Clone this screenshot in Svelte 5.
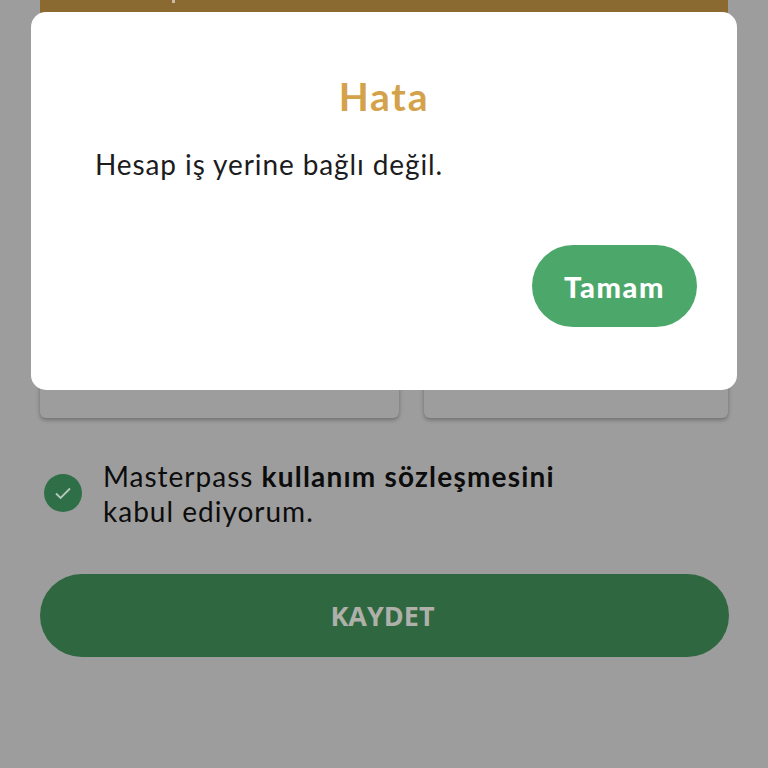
<script>
    let accepted = $state(true);
    let showError = $state(true);
</script>

<style>
    :global(body) {
        margin: 0;
        background: #9d9d9d;
    }

    .page {
        position: relative;
        height: 768px;
        overflow: hidden;
        padding: 0 40px;
        box-sizing: border-box;
        font-family: Lato, "Noto Sans", sans-serif;
        color: #0c0c0c;
    }

    .top-bar {
        position: relative;
        height: 60px;
        background: #8a6a30;
    }

    /* descender of the label that scrolled off the top */
    .top-bar::before {
        content: "";
        position: absolute;
        top: 0;
        left: 132px;
        width: 3px;
        height: 3px;
        background: #c9b9a6;
    }

    .fields {
        display: flex;
        gap: 25px;
        margin-top: 268px;
    }

    .field {
        flex: 359;
        height: 90px;
        background: #9d9d9d;
        border-radius: 6px;
        box-shadow: 0 2px 4px rgba(0, 0, 0, 0.3);
    }

    .field + .field {
        flex: 304;
    }

    .agreement {
        display: flex;
        align-items: center;
        gap: 21px;
        margin: 41px 0 0 4px;
        font-size: 28px;
        line-height: 35px;
        letter-spacing: 1px;
    }

    .check {
        flex: none;
        width: 38px;
        height: 38px;
        margin-top: -2px;
        padding: 0;
        border: none;
        border-radius: 50%;
        background: #2f6f47;
        display: flex;
        align-items: center;
        justify-content: center;
    }

    .agreement b {
        font-weight: 700;
        letter-spacing: 1.2px;
    }

    .save {
        display: block;
        width: 689px;
        height: 83px;
        margin-top: 45px;
        padding: 0 4px 0 0;
        border: none;
        border-radius: 42px;
        background: #2f6840;
        color: #b0b0aa;
        font-family: "Open Sans", sans-serif;
        font-size: 27px;
        font-weight: 700;
    }

    .dialog {
        position: absolute;
        top: 12px;
        left: 31px;
        width: 706px;
        height: 378px;
        box-sizing: border-box;
        padding: 59px 40px 0 64px;
        background: #fff;
        border-radius: 15px;
    }

    h2 {
        margin: 0 0 0 -24px;
        text-align: center;
        color: #d4a24a;
        font-size: 39px;
        line-height: 50px;
        font-weight: 700;
        letter-spacing: 1.8px;
    }

    .dialog p {
        margin: 24px 0 0;
        font-size: 28px;
        line-height: 38px;
        letter-spacing: 0.9px;
        color: #1c1c1e;
    }

    .actions {
        display: flex;
        justify-content: flex-end;
        margin-top: 62px;
    }

    .ok {
        width: 165px;
        height: 82px;
        border: none;
        border-radius: 41px;
        background: #4ca86a;
        color: #fff;
        font-family: Lato, sans-serif;
        font-size: 29px;
        font-weight: 900;
        letter-spacing: 1.6px;
    }
</style>

<div class="page">
    <div class="top-bar"></div>

    <div class="fields">
        <div class="field"></div>
        <div class="field"></div>
    </div>

    <div class="agreement">
        <button class="check" aria-label="Kabul" onclick={() => (accepted = !accepted)}>
            {#if accepted}
                <svg width="18" height="18" viewBox="0 0 18 18" fill="none" stroke="#b5c9bb" stroke-width="1.8">
                    <path d="M2 9.5l4.6 4.5L16 4.5" />
                </svg>
            {/if}
        </button>
        <span>Masterpass <b>kullanım sözleşmesini</b><br />kabul ediyorum.</span>
    </div>

    <button class="save">KAYDET</button>

    {#if showError}
        <div class="dialog">
            <h2>Hata</h2>
            <p>Hesap iş yerine bağlı değil.</p>
            <div class="actions">
                <button class="ok" onclick={() => (showError = false)}>Tamam</button>
            </div>
        </div>
    {/if}
</div>
